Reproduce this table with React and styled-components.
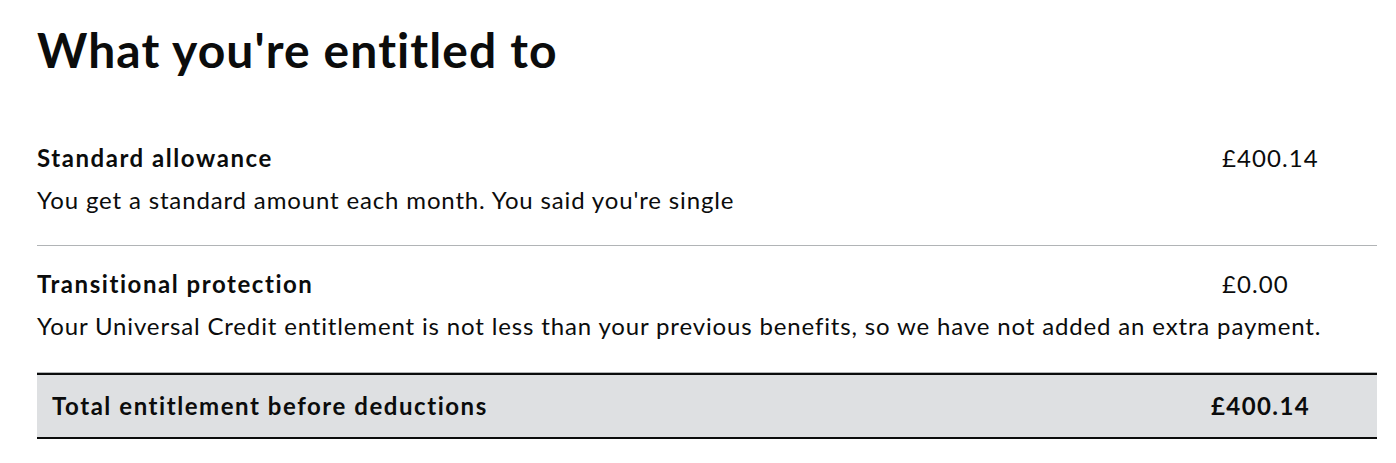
import styled, { createGlobalStyle } from 'styled-components'

const GlobalStyle = createGlobalStyle`
    body {
        margin: 0;
        background: #ffffff;
        color: #0b0c0c;
        font-family: Lato, "Noto Sans", Arial, sans-serif;
    }
`

const Page = styled.div`
    width: 1340px;
    padding: 0 0 0 37px;
`

const Heading = styled.h1`
    margin: 23px 0 0;
    font-size: 48px;
    line-height: 54px;
    font-weight: 700;
    letter-spacing: 1.1px;
`

const Summary = styled.div`
    margin-top: 66px;
    display: flex;
    flex-direction: column;
`

const Row = styled.div`
    padding: ${props => (props.$first ? '0 0 30px' : '23px 0 31px')};
    border-bottom: 1px solid #b1b4b6;
`

const RowHeader = styled.div`
    display: grid;
    grid-template-columns: 1fr 155px;
    font-size: 24px;
    line-height: 30px;
`

const Label = styled.span`
    font-weight: 700;
    letter-spacing: 1.55px;
`

const Amount = styled.span`
    font-weight: ${props => (props.$bold ? 700 : 400)};
    letter-spacing: ${props => (props.$bold ? '1.4px' : '1.1px')};
`

const Description = styled.p`
    margin: 12px 0 0;
    font-size: 24px;
    line-height: 30px;
    letter-spacing: 0.85px;
`

const Total = styled.div`
    display: grid;
    grid-template-columns: 1fr 151px;
    padding: 16px 15px;
    background: #dee0e2;
    border-top: 2px solid #0b0c0c;
    border-bottom: 2px solid #0b0c0c;
    font-size: 24px;
    line-height: 30px;
`

const entitlements = [
    {
        label: 'Standard allowance',
        amount: '£400.14',
        description: "You get a standard amount each month. You said you're single"
    },
    {
        label: 'Transitional protection',
        amount: '£0.00',
        description: 'Your Universal Credit entitlement is not less than your previous benefits, so we have not added an extra payment.'
    }
]

function App () {
    return (
        <>
            <GlobalStyle />
            <Page>
                <Heading>What you're entitled to</Heading>
                <Summary>
                    {entitlements.map((item, index) => (
                        <Row key={item.label} $first={index === 0}>
                            <RowHeader>
                                <Label>{item.label}</Label>
                                <Amount>{item.amount}</Amount>
                            </RowHeader>
                            <Description>{item.description}</Description>
                        </Row>
                    ))}
                    <Total>
                        <Label>Total entitlement before deductions</Label>
                        <Amount $bold>£400.14</Amount>
                    </Total>
                </Summary>
            </Page>
        </>
    )
}

export default App
